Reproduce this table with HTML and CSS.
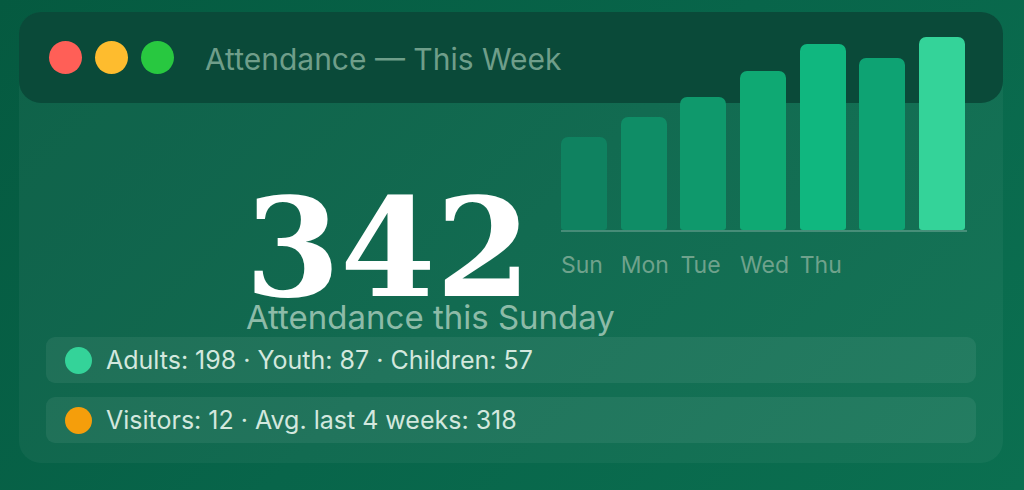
FILE: index.html
```html
<!DOCTYPE html>
<html lang="en">
<head>
<meta charset="utf-8">
<title>Attendance — This Week</title>
<link rel="stylesheet" href="styles.css">
</head>
<body>
<div class="card">
  <div class="titlebar">
    <span class="light red"></span>
    <span class="light yellow"></span>
    <span class="light green"></span>
    <span class="title">Attendance — This Week</span>
  </div>
  <div class="main">
    <div class="hero">
      <div class="number">342</div>
      <div class="caption">Attendance this Sunday</div>
    </div>
    <div class="chart">
      <div class="bars">
        <div class="bar b-sun" style="height:93px"></div>
        <div class="bar b-mon" style="height:113px"></div>
        <div class="bar b-tue" style="height:133px"></div>
        <div class="bar b-wed" style="height:159px"></div>
        <div class="bar b-thu" style="height:186px"></div>
        <div class="bar b-fri" style="height:172px"></div>
        <div class="bar b-sat" style="height:193px"></div>
      </div>
      <div class="axis"></div>
      <div class="days">
        <span class="day">Sun</span>
        <span class="day">Mon</span>
        <span class="day">Tue</span>
        <span class="day">Wed</span>
        <span class="day">Thu</span>
      </div>
    </div>
  </div>
  <div class="rows">
    <div class="row"><span class="dot dot-green"></span><span class="row-text">Adults: 198 · Youth: 87 · Children: 57</span></div>
    <div class="row"><span class="dot dot-orange"></span><span class="row-text">Visitors: 12 · Avg. last 4 weeks: 318</span></div>
  </div>
</div>
</body>
</html>
```
FILE: styles.css
```css
html, body {
  margin: 0;
  height: 100%;
}
body {
  background: linear-gradient(135deg, #055a40 0%, #08654a 50%, #0b6f50 100%);
  font-family: Inter, "Noto Sans", sans-serif;
  padding: 12px 21px 0 19px;
  box-sizing: border-box;
  overflow: hidden;
}
.card {
  width: 984px;
  height: 451px;
  box-sizing: border-box;
  border-radius: 22px;
  background: rgba(255, 255, 255, 0.045);
  display: flex;
  flex-direction: column;
}
.titlebar {
  height: 91px;
  flex: none;
  background: #0a4a39;
  border-radius: 22px;
  display: flex;
  align-items: center;
  padding-left: 30px;
  gap: 13px;
}
.light {
  width: 33px;
  height: 33px;
  border-radius: 50%;
  flex: none;
}
.red { background: #ff5f57; }
.yellow { background: #febc2e; }
.green { background: #28c840; }
.title {
  margin-left: 18px;
  margin-top: 3px;
  font-size: 30px;
  color: #6f9e8a;
}
.main {
  display: flex;
  align-items: flex-start;
  height: 234px;
  flex: none;
}
.hero {
  width: 316px;
  margin-left: 226px;
  margin-top: 95px;
  white-space: nowrap;
  flex: none;
}
.number {
  font-family: "DejaVu Serif", serif;
  font-weight: 700;
  font-size: 137px;
  line-height: 100px;
  color: #ffffff;
}
.caption {
  font-size: 33px;
  color: #8dbba8;
  line-height: 1.2;
  margin-left: 1px;
}
.chart {
  margin-top: -66px;
  width: 406px;
  flex: none;
}
.bars {
  height: 193px;
  display: flex;
  align-items: flex-end;
  gap: 13.7px;
}
.bar {
  width: 46px;
  border-radius: 7px 7px 3px 3px;
  flex: none;
}
.b-sun { background: #0f8260; }
.b-mon { background: #0f8d66; }
.b-tue { background: #0f996c; }
.b-wed { background: #0fa973; }
.b-thu { background: #10b77f; }
.b-fri { background: #0ea373; }
.b-sat { background: #34d399; }
.axis {
  height: 2px;
  background: rgba(255, 255, 255, 0.22);
}
.days {
  display: flex;
  gap: 13.7px;
  margin-top: 19px;
}
.day {
  width: 46px;
  flex: none;
  font-size: 23px;
  color: #6fa28c;
  white-space: nowrap;
}
.rows {
  margin: 0 27px;
  display: flex;
  flex-direction: column;
  gap: 14px;
}
.row {
  height: 46px;
  border-radius: 9px;
  background: rgba(255, 255, 255, 0.065);
  display: flex;
  align-items: center;
  padding-left: 19px;
  gap: 14px;
}
.dot {
  width: 27px;
  height: 27px;
  border-radius: 50%;
  flex: none;
}
.dot-green { background: #34d399; }
.dot-orange { background: #f59e0b; }
.row-text {
  font-size: 25px;
  color: #d3e8de;
}
```
